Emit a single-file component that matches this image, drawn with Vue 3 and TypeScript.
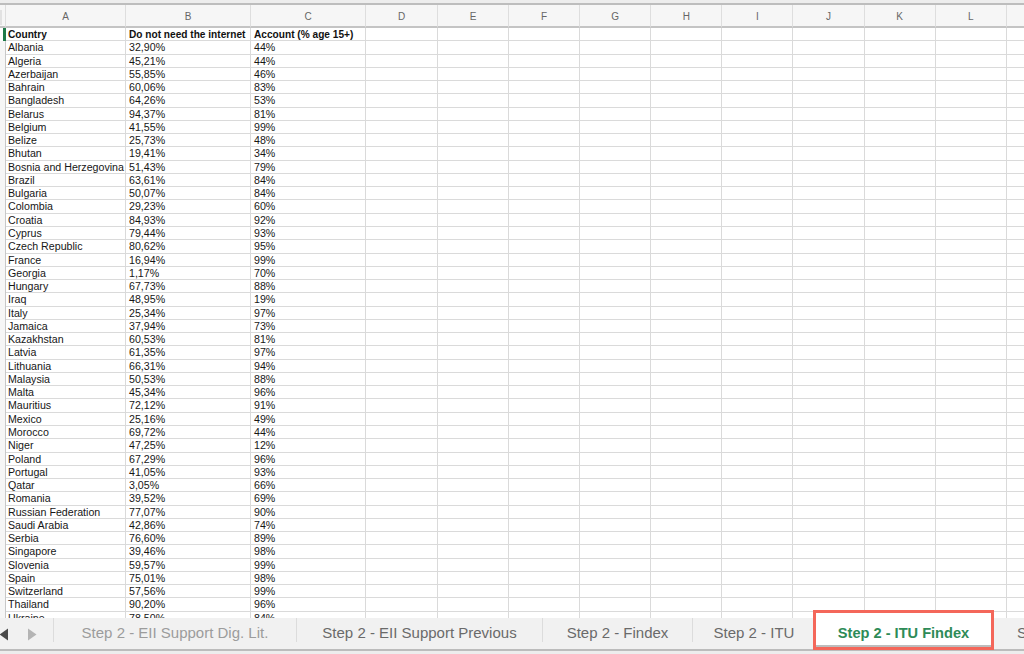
<script setup lang="ts">
const raw = `Albania|32,90%|44%
Algeria|45,21%|44%
Azerbaijan|55,85%|46%
Bahrain|60,06%|83%
Bangladesh|64,26%|53%
Belarus|94,37%|81%
Belgium|41,55%|99%
Belize|25,73%|48%
Bhutan|19,41%|34%
Bosnia and Herzegovina|51,43%|79%
Brazil|63,61%|84%
Bulgaria|50,07%|84%
Colombia|29,23%|60%
Croatia|84,93%|92%
Cyprus|79,44%|93%
Czech Republic|80,62%|95%
France|16,94%|99%
Georgia|1,17%|70%
Hungary|67,73%|88%
Iraq|48,95%|19%
Italy|25,34%|97%
Jamaica|37,94%|73%
Kazakhstan|60,53%|81%
Latvia|61,35%|97%
Lithuania|66,31%|94%
Malaysia|50,53%|88%
Malta|45,34%|96%
Mauritius|72,12%|91%
Mexico|25,16%|49%
Morocco|69,72%|44%
Niger|47,25%|12%
Poland|67,29%|96%
Portugal|41,05%|93%
Qatar|3,05%|66%
Romania|39,52%|69%
Russian Federation|77,07%|90%
Saudi Arabia|42,86%|74%
Serbia|76,60%|89%
Singapore|39,46%|98%
Slovenia|59,57%|99%
Spain|75,01%|98%
Switzerland|57,56%|99%
Thailand|90,20%|96%
Ukraine|78,50%|84%`
const rows: string[][] = raw.split('\n').map((l) => l.split('|'))
const letters = ['A', 'B', 'C', 'D', 'E', 'F', 'G', 'H', 'I', 'J', 'K', 'L', '']
const head = ['Country', 'Do not need the internet', 'Account (% age 15+)']
const blanks = 10
const tabs = [
  { label: 'Step 2 - EII Support Dig. Lit.', cls: 'w1 faded' },
  { label: 'Step 2 - EII Support Previous', cls: 'w2' },
  { label: 'Step 2 - Findex', cls: 'w3' },
  { label: 'Step 2 - ITU', cls: 'w4' },
]
</script>

<template>
  <div class="screen">
    <div class="topline"></div>
    <div class="sheet">
      <div class="grid">
        <div class="corner"><span class="corner-block"></span></div>
        <div v-for="l in letters" :key="'h' + l" class="colhead">{{ l }}</div>

        <div class="rowhead marker"></div>
        <div v-for="(h, i) in head" :key="h" class="cell bold" :class="{ first: i === 0 }">{{ h }}</div>
        <div v-for="n in blanks" :key="'hb' + n" class="cell"></div>

        <template v-for="r in rows" :key="r[0]">
          <div class="rowhead"></div>
          <div v-for="(c, i) in r" :key="i" class="cell" :class="{ first: i === 0 }">{{ c }}</div>
          <div v-for="n in blanks" :key="n" class="cell"></div>
        </template>
      </div>
    </div>
    <div class="tabbar">
      <div class="arrows">
        <svg width="10" height="13" viewBox="0 0 10 13" class="arr"><path d="M9 0.5V12.5L0.5 6.5Z" fill="#4a4a4a" /></svg>
        <svg width="10" height="13" viewBox="0 0 10 13" class="arr2"><path d="M1 0.5V12.5L9.5 6.5Z" fill="#b4b4b4" /></svg>
      </div>
      <div v-for="t in tabs" :key="t.label" class="tab" :class="t.cls">{{ t.label }}</div>
      <div class="tab active">Step 2 - ITU Findex</div>
      <div class="tab rest">Step 2 - ITU</div>
    </div>
  </div>
</template>

<style>
html, body { margin: 0; background: #fff; overflow: hidden; }
</style>

<style scoped>
.screen {
  width: 1024px;
  height: 654px;
  display: flex;
  flex-direction: column;
  overflow: hidden;
  position: relative;
  font-family: "Liberation Sans", Arial, sans-serif;
  background: #ededed;
}
.topline {
  height: 2px;
  margin-top: 3px;
  background: #bdbdbd;
  flex: none;
}
.sheet {
  height: 613px;
  flex: none;
  overflow: hidden;
  background: #fff;
}
.grid {
  display: grid;
  grid-template-columns: 6px 120px 125px 115px 72px repeat(8, 71.1px) 50px;
  grid-template-rows: 23px;
  grid-auto-rows: 13.27px;
}
.corner, .colhead {
  background: #f6f6f6;
  border-right: 1px solid #dedede;
  border-bottom: 2px solid #c4c4c4;
  box-sizing: border-box;
}
.corner { padding-top: 5px; }
.corner-block {
  display: block;
  width: 2px;
  height: 15px;
  background: #e2e2e2;
}
.colhead {
  font-size: 10px;
  color: #666;
  text-align: center;
  line-height: 23px;
}
.rowhead {
  background: #f6f6f6;
  border-right: 1px solid #c8c8c8;
  box-sizing: border-box;
}
.marker {
  background: #1f7a48;
  border-right: 0;
  margin-left: 3px;
}
.cell {
  box-sizing: border-box;
  border-right: 1px solid #dadada;
  border-bottom: 1px solid #dadada;
  font-size: 10.65px;
  line-height: 13px;
  padding-left: 3px;
  color: #161616;
  white-space: nowrap;
  overflow: hidden;
}
.first { padding-left: 2px; }
.bold { font-weight: 700; font-size: 10.15px; color: #111; }
.tabbar {
  height: 31px;
  flex: none;
  display: flex;
  background: #f1f1f1;
  border-bottom: 2px solid #bcbcbc;
  position: relative;
}
.arrows {
  width: 54px;
  flex: none;
  display: flex;
  align-items: center;
  border-right: 1px solid #dcdcdc;
  margin-bottom: 7px;
  padding-top: 8px;
  box-sizing: border-box;
}
.arr { margin-left: -1px; }
.arr2 { margin-left: 18px; }
.tab {
  font-size: 15px;
  color: #6a6a6a;
  line-height: 30px;
  text-align: center;
  white-space: nowrap;
  flex: none;
  box-sizing: border-box;
}
.w1, .w2, .w3 { border-right: 1px solid #dcdcdc; margin-bottom: 7px; }
.w4 { margin-bottom: 7px; }
.w1 { width: 243px; }
.w2 { width: 246px; }
.w3 { width: 150px; }
.w4 { width: 122px; }
.faded { color: #9c9c9c; }
.active {
  position: absolute;
  left: 813px;
  top: -8px;
  width: 181px;
  height: 40px;
  border: 3px solid #f4675a;
  background: #fff;
  color: #2e8b57;
  font-weight: 700;
  font-size: 14.6px;
  line-height: 40px;
  box-shadow: inset 0 -2px 0 #bdbdbd;
}
.rest {
  position: absolute;
  left: 1017px;
  top: 0;
}
</style>
